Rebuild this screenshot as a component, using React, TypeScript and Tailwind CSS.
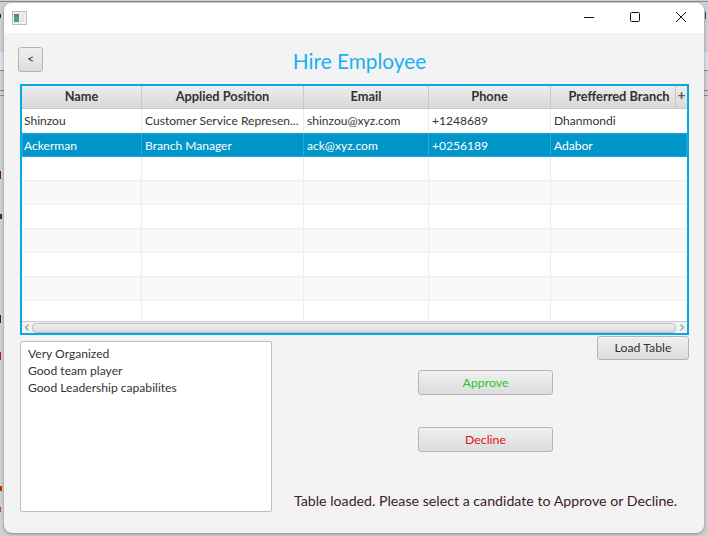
const font = { fontFamily: 'Lato, "Open Sans", sans-serif' };

const columns = [
  { title: "Name", w: "w-[120px]" },
  { title: "Applied Position", w: "w-[162px]" },
  { title: "Email", w: "w-[125px]" },
  { title: "Phone", w: "w-[122px]" },
  { title: "Prefferred Branch", w: "flex-1" },
];

const rows = [
  ["Shinzou", "Customer Service Represen...", "shinzou@xyz.com", "+1248689", "Dhanmondi"],
  ["Ackerman", "Branch Manager", "ack@xyz.com", "+0256189", "Adabor"],
  ["", "", "", "", ""],
  ["", "", "", "", ""],
  ["", "", "", "", ""],
  ["", "", "", "", ""],
  ["", "", "", "", ""],
  ["", "", "", "", ""],
  ["", "", "", "", ""],
];

const btn =
  "flex items-center justify-center rounded-[3px] border border-[#b5b5b5] bg-gradient-to-b from-[#f0f0f0] to-[#dcdcdc] text-[12.3px]";

function Row({ cells, index }: { cells: string[]; index: number }) {
  const selected = index === 1;
  const bg = selected ? "bg-[#0096c9]" : index % 2 === 0 ? "bg-white" : "bg-[#f9f9f9]";
  const h = index === 8 ? "h-[21px]" : "h-[24px]";
  return (
    <div
      className={`flex shrink-0 ${h} ${bg} ${
        selected ? "shadow-[inset_0_0_0_1px_#1fa8d8] text-white" : "border-b border-[#f0f0f0] text-[#333333]"
      }`}
    >
      {cells.map((c, i) => (
        <div
          key={i}
          className={`${columns[i].w} flex items-center whitespace-nowrap overflow-hidden pt-[2px] text-[12.05px] ${
            i === 0 ? "pl-[2px]" : "pl-[3px]"
          } ${i === 4 ? "" : selected ? "border-r border-[#2aa9d6]" : "border-r border-[#ececec]"}`}
        >
          {c}
        </div>
      ))}
    </div>
  );
}

export default function App() {
  return (
    <div className="relative w-[708px] h-[536px] overflow-hidden bg-[#cfcfcf] pt-[3px] pb-[3px] px-[4px]" style={font}>
      <div className="absolute left-0 top-[1px] h-[1px] w-full bg-[#8a8a8a]" />
      <div className="absolute left-0 top-[52px] h-[18px] w-[4px] bg-[#d9e0ea]" />
      <div className="absolute left-0 top-[70px] h-[1px] w-[4px] bg-[#8a8a8a]" />
      <div className="absolute left-0 top-[90px] h-[1px] w-[4px] bg-[#8a8a8a]" />
      <div className="absolute left-0 top-[95px] h-[1px] w-[4px] bg-[#8a8a8a]" />
      <div className="absolute right-0 top-[52px] h-[18px] w-[4px] bg-[#d9e0ea]" />
      <div className="absolute right-0 top-[70px] h-[1px] w-[4px] bg-[#8a8a8a]" />
      <div className="absolute right-0 top-[90px] h-[1px] w-[4px] bg-[#8a8a8a]" />
      <div className="absolute right-0 top-[95px] h-[1px] w-[4px] bg-[#8a8a8a]" />
      <div className="absolute left-[705px] top-[12px] h-[7px] w-[1px] bg-[#3a4a90]" />
      <div className="absolute left-0 top-[14px] h-[4px] w-[1px] bg-[#202a60]" />
      <div className="absolute left-0 top-[171px] h-[8px] w-[1px] bg-[#7a1020]" />
      <div className="absolute left-0 top-[214px] h-[5px] w-[2px] bg-[#333333]" />
      <div className="absolute left-0 top-[315px] h-[8px] w-[1px] bg-[#40107a]" />
      <div className="absolute left-0 top-[352px] h-[8px] w-[1px] bg-[#c01010]" />
      <div className="absolute left-0 top-[486px] h-[5px] w-[2px] bg-[#c03000]" />
      <div className="absolute left-0 top-[507px] h-[5px] w-[1px] bg-[#b030a0]" />

      <div className="relative flex h-[530px] flex-col overflow-hidden rounded-[8px] bg-[#f3f3f3] shadow-[0_1px_3px_rgba(0,0,0,0.35)]">
        <div className="flex h-[30px] shrink-0 items-center bg-white">
          <svg className="ml-[8px]" width="15" height="15" viewBox="0 0 15 15">
            <rect x="0.5" y="0.5" width="14" height="13" fill="#f0f0f0" stroke="#bdbdbd" />
            <rect x="2" y="3" width="5" height="8" fill="#4f9a8c" />
            <rect x="2" y="3" width="5" height="3" fill="#5a7f9c" />
            <rect x="8" y="3" width="4" height="8" fill="#dfe8e4" />
          </svg>
          <div className="ml-auto flex items-center text-black">
            <svg width="46" height="30" viewBox="0 0 46 30">
              <path d="M18 14.5h10" stroke="#111" fill="none" />
            </svg>
            <svg width="46" height="30" viewBox="0 0 46 30">
              <rect x="18.5" y="9.5" width="9" height="9" rx="1" stroke="#111" fill="none" />
            </svg>
            <svg width="46" height="30" viewBox="0 0 46 30">
              <path d="M18 9l10 10M28 9L18 19" stroke="#111" fill="none" />
            </svg>
          </div>
        </div>

        <div className="flex min-h-0 flex-1 flex-col pl-[16px] pr-[15px]">
          <div className="relative mt-[14px] flex h-[25px] shrink-0 items-center justify-center">
            <div className={`${btn} absolute left-[-2px] top-0 h-[25px] w-[25px] text-[#333333]`}>&lt;</div>
            <div className="ml-[10px] pt-[3px] text-[20.8px] leading-none text-[#1ab0f5]">Hire Employee</div>
          </div>

          <div className="mt-[12px] flex h-[251px] shrink-0 flex-col border-2 border-[#0aa8e0] bg-white">
            <div className="relative flex h-[23px] shrink-0 border-b border-[#c8c8c8] bg-gradient-to-b from-[#ededed] to-[#d8d8d8] text-[12.8px] font-bold text-[#333333]">
              {columns.map((c, i) => (
                <div
                  key={c.title}
                  className={`${c.w} flex items-center justify-center whitespace-nowrap ${i === 4 ? "" : "border-r border-[#c8c8c8]"}`}
                >
                  {c.title}
                </div>
              ))}
              <div className="absolute inset-y-0 right-0 flex w-[12px] items-center justify-center border-l border-[#c8c8c8] pb-[2px] text-[13px] font-black text-[#555555]">
                +
              </div>
            </div>
            <div className="flex min-h-0 flex-1 flex-col overflow-hidden">
              {rows.map((r, i) => (
                <Row key={i} cells={r} index={i} />
              ))}
            </div>
            <div className="flex h-[12px] shrink-0 items-center border-t border-[#c8c8c8] bg-[#f2f2f2]">
              <svg width="10" height="11" viewBox="0 0 10 11">
                <path d="M6.5 2.5L3.5 5.5l3 3" stroke="#9a9a9a" strokeWidth="1.2" fill="none" />
              </svg>
              <div className="h-[10px] flex-1 rounded-[4px] border border-[#bdbdbd] bg-gradient-to-b from-[#f0f0f0] to-[#dcdcdc]" />
              <svg width="11" height="11" viewBox="0 0 11 11">
                <path d="M4.5 2.5l3 3-3 3" stroke="#9a9a9a" strokeWidth="1.2" fill="none" />
              </svg>
            </div>
          </div>

          <div className="flex min-h-0 flex-1">
            <div className="mt-[6px] h-[171px] w-[252px] shrink-0 rounded-[2px] border border-[#c0c0c0] bg-white px-[7px] py-[3px] text-[12.1px] leading-[17px] text-[#333333]">
              <div>Very Organized</div>
              <div>Good team player</div>
              <div>Good Leadership capabilites</div>
            </div>
            <div className="flex flex-1 flex-col items-start">
              <div className={`${btn} mt-[1px] h-[24px] w-[92px] self-end text-[#333333]`}>Load Table</div>
              <div className={`${btn} ml-[146px] mt-[10px] h-[25px] w-[135px] pt-[2px] text-[#22cc22]`}>Approve</div>
              <div className={`${btn} ml-[146px] mt-[32px] h-[25px] w-[135px] pt-[2px] text-[#e01020]`}>Decline</div>
              <div className="ml-[22px] mt-[40px] whitespace-nowrap text-[14.2px] leading-[18px] text-[#3a2030]">
                Table loaded. Please select a candidate to Approve or Decline.
              </div>
            </div>
          </div>
        </div>
      </div>
    </div>
  );
}
